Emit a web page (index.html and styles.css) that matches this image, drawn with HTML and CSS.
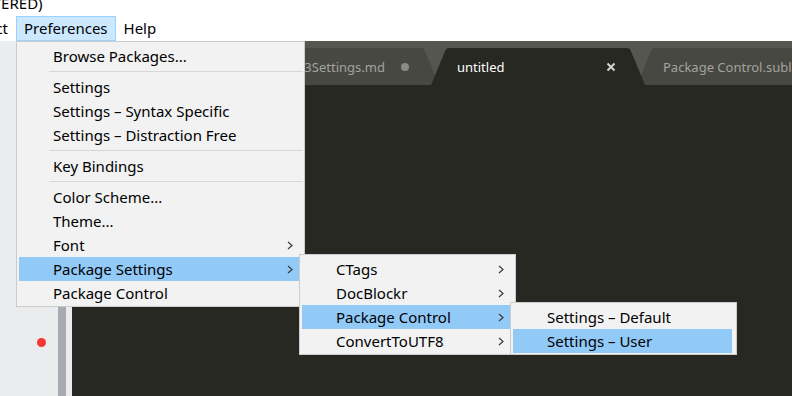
FILE: index.html
```html
<!DOCTYPE html>
<html lang="en">
<head>
  <meta charset="utf-8"/>
  <title>untitled - Sublime Text</title>
  <link rel="stylesheet" href="styles.css">
</head>
<body>
  <div class="titlebar"><span class="title">(UNREGISTERED)</span></div>
  <nav class="menubar">
    <span class="menu-item">Project</span>
    <span class="menu-item is-open">Preferences</span>
    <span class="menu-item">Help</span>
  </nav>

  <div class="workspace">
    <div class="gutter"><span class="marker"></span></div>
    <div class="scroll-track"></div>
    <div class="gutter-gap"></div>
    <div class="editor">
      <div class="tabbar">
        <div class="tab">
          <span class="tab-label">Sublime3Settings.md</span>
          <svg class="tab-icon" viewBox="0 0 12 12"><circle cx="6" cy="6" r="4" fill="#8b8c87"/></svg>
        </div>
        <div class="tab active">
          <span class="tab-label">untitled</span>
          <svg class="tab-icon" viewBox="0 0 12 12"><path d="M2.5 2.5l7 7M9.5 2.5l-7 7" stroke="#d2d2d0" stroke-width="2"/></svg>
        </div>
        <div class="tab">
          <span class="tab-label">Package Control.sublime-settings</span>
        </div>
      </div>
      <div class="code"></div>
    </div>
  </div>

  <!-- open menus -->
  <div class="menu menu-main">
    <div class="menu-row">Browse Packages...</div>
    <div class="menu-sep"></div>
    <div class="menu-row">Settings</div>
    <div class="menu-row">Settings – Syntax Specific</div>
    <div class="menu-row">Settings – Distraction Free</div>
    <div class="menu-sep"></div>
    <div class="menu-row">Key Bindings</div>
    <div class="menu-sep"></div>
    <div class="menu-row">Color Scheme...</div>
    <div class="menu-row">Theme...</div>
    <div class="menu-row">Font <svg class="chev" viewBox="0 0 6 9"><path d="M1 1l4 3.5L1 8"/></svg></div>
    <div class="menu-row is-hot">Package Settings <svg class="chev" viewBox="0 0 6 9"><path d="M1 1l4 3.5L1 8"/></svg></div>
    <div class="menu-row">Package Control</div>
  </div>

  <div class="menu menu-sub">
    <div class="menu-row">CTags <svg class="chev" viewBox="0 0 6 9"><path d="M1 1l4 3.5L1 8"/></svg></div>
    <div class="menu-row">DocBlockr <svg class="chev" viewBox="0 0 6 9"><path d="M1 1l4 3.5L1 8"/></svg></div>
    <div class="menu-row is-hot">Package Control <svg class="chev" viewBox="0 0 6 9"><path d="M1 1l4 3.5L1 8"/></svg></div>
    <div class="menu-row">ConvertToUTF8 <svg class="chev" viewBox="0 0 6 9"><path d="M1 1l4 3.5L1 8"/></svg></div>
  </div>

  <div class="menu menu-sub2">
    <div class="menu-row">Settings – Default</div>
    <div class="menu-row is-hot">Settings – User</div>
  </div>
</body>
</html>
```

FILE: styles.css
```css
body { margin:0; width:792px; height:396px; overflow:hidden; position:relative; background:#fff; color:#000; font-family:"Noto Sans", sans-serif; font-size:15px; }

.titlebar { height:16px; overflow:hidden; white-space:nowrap; }
.title { display:block; line-height:17px; margin:-5px 0 0 -76px; }

.menubar { display:flex; height:25px; margin-left:-49px; white-space:nowrap; }
.menu-item { padding:0 7px; line-height:23px; border:1px solid transparent; }
.menu-item.is-open { background:#cce8ff; border-color:#99d1ff; }

.workspace { display:flex; height:355px; }
.gutter { width:58px; flex:none; background:#ebecee; }
.marker { display:block; width:9px; height:9px; border-radius:50%; background:#f53535; margin:297px 0 0 37px; }
.scroll-track { width:8px; flex:none; background:#a8aab1; }
.gutter-gap { width:6px; flex:none; background:#ebecee; }

.editor { flex:1; display:flex; flex-direction:column; background:#272822; min-width:0; }
.tabbar { height:44px; box-sizing:border-box; padding:7px 0 0 153px; background:#55564f; display:flex; overflow:hidden; }
.tab { width:214px; height:37px; flex:none; box-sizing:border-box; display:flex; align-items:center; padding-left:26px; background:#474842; color:#a2a39e; font-size:13px; position:relative;
  clip-path:path('M0 37 L14.5 2 Q15.5 0 18 0 L196 0 Q198.5 0 199.5 2 L214 37 Z'); }
.tab:first-child { padding-left:30px; }
.tab + .tab { margin-left:-8px; }
.tab.active { background:#272822; color:#fff; z-index:1; }
.tab-label { flex:1; overflow:hidden; white-space:nowrap; }
.tab-icon { width:12px; height:12px; flex:none; margin-right:28px; }
.code { flex:1; }

.menu { position:absolute; box-sizing:border-box; background:#f2f2f2; border:1px solid #ccc; padding:2px 1px 1px 2px; }
.menu-main { left:16px; top:41px; width:289px; }
.menu-sub { left:299px; top:254px; width:217px; }
.menu-sub2 { left:510px; top:302px; width:227px; }
.menu-row { height:24px; display:flex; align-items:center; justify-content:space-between; padding:0 7px 0 34px; margin-right:3px; white-space:nowrap; }
.menu-row.is-hot { background:#91c9f7; }
.menu-sep { height:1px; background:#d7d7d7; margin:3px 0 3px 30px; }
.chev { width:6px; height:9px; fill:none; stroke:#3a3a3a; stroke-width:1.2; }
```
